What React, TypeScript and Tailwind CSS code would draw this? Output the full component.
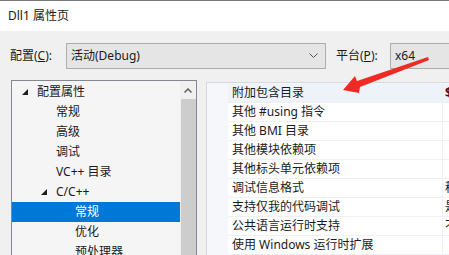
import React from "react";

const tree = [
  { label: "配置属性", level: 1, open: true },
  { label: "常规", level: 2 },
  { label: "高级", level: 2 },
  { label: "调试", level: 2 },
  { label: "VC++ 目录", level: 2 },
  { label: "C/C++", level: 2, open: true },
  { label: "常规", level: 3, selected: true },
  { label: "优化", level: 3 },
  { label: "预处理器", level: 3 },
];

const props = [
  { name: "附加包含目录", value: "$(SolutionDir)include", bold: true },
  { name: "其他 #using 指令", value: "" },
  { name: "其他 BMI 目录", value: "" },
  { name: "其他模块依赖项", value: "" },
  { name: "其他标头单元依赖项", value: "" },
  { name: "调试信息格式", value: "程序数据库 (/Zi)" },
  { name: "支持仅我的代码调试", value: "是 (/JMC)" },
  { name: "公共语言运行时支持", value: "不支持" },
  { name: "使用 Windows 运行时扩展", value: "" },
];

function Tri() {
  return (
    <svg width="6" height="6" viewBox="0 0 6 6" className="shrink-0">
      <polygon points="6,0 6,6 0,6" fill="#1e1e1e" />
    </svg>
  );
}

export default function App() {
  return (
    <div className="relative w-[449px] h-[255px] overflow-hidden bg-[#f0f0f0] text-[12px] text-[#1a1a1a] font-['Noto_Sans','Noto_Sans_CJK_SC',sans-serif]">
      {/* title */}
      <div className="h-[31px] bg-white border-t border-[#7a7a7a] flex items-center pl-[8px]">
        Dll1 属性页
      </div>

      {/* config row */}
      <div className="mt-[12px] h-[26px] flex items-center">
        <div className="w-[66px] shrink-0 pl-[10px]">
          配置(<span className="underline">C</span>):
        </div>
        <div className="w-[260px] shrink-0 h-[26px] border border-[#adadad] bg-[#e5e5e5] flex items-center justify-between pl-[4px] pr-[7px]">
          <span>活动(Debug)</span>
          <svg width="9" height="6" viewBox="0 0 9 6">
            <polyline points="0.5,0.5 4.5,4.5 8.5,0.5" fill="none" stroke="#555" strokeWidth="1" />
          </svg>
        </div>
        <div className="w-[64px] shrink-0 pl-[10px]">
          平台(<span className="underline">P</span>):
        </div>
        <div className="w-[70px] shrink-0 h-[26px] border border-[#adadad] bg-[#e5e5e5] flex items-center pl-[4px]">
          x64
        </div>
      </div>

      {/* main */}
      <div className="mt-[11px] flex">
        <div className="ml-[11px] w-[186px] shrink-0 h-[200px] border border-[#828790] bg-[#f5f5f5] flex">
          <div className="flex-1 pt-[1px]">
            {tree.map((t, i) => (
              <div
                key={i}
                className={`h-[20px] flex items-center whitespace-nowrap ${t.selected ? "bg-[#0078d7] text-white" : ""} ${
                  t.level === 1 ? "pl-[10px]" : t.level === 2 ? "pl-[29px]" : "pl-[48px]"
                }`}
              >
                <span className="w-[15px] shrink-0 flex items-center">{t.open ? <Tri /> : null}</span>
                <span>{t.label}</span>
              </div>
            ))}
          </div>
          <div className="w-[16px] shrink-0 bg-[#f0f0f0] flex flex-col items-center">
            <div className="h-[18px] flex items-center justify-center">
              <svg width="8" height="5" viewBox="0 0 8 5">
                <polyline points="0.5,4.5 4,1 7.5,4.5" fill="none" stroke="#606060" strokeWidth="1.5" />
              </svg>
            </div>
            <div className="w-[15px] flex-1 bg-[#cdcdcd]" />
          </div>
        </div>

        <div className="ml-[9px] mt-[2px] w-[300px] shrink-0 h-[200px] border-l border-t border-[#d5d8dd] bg-[#f5f7fb] pl-[21px] pt-[1px]">
          {props.map((p, i) => (
            <div
              key={i}
              className={`h-[19px] flex border-b border-[#eef0f3] ${i === 0 ? "bg-[#eef3fa]" : "bg-white"}`}
            >
              <div className="w-[214px] shrink-0 pl-[4px] flex items-center whitespace-nowrap">{p.name}</div>
              <div
                className={`flex-1 border-l border-[#eef0f3] pl-[2px] flex items-center whitespace-nowrap overflow-hidden ${
                  p.bold ? "font-bold text-[#5a0a0a]" : ""
                }`}
              >
                {p.value}
              </div>
            </div>
          ))}
        </div>
      </div>

      {/* red arrow */}
      <svg className="absolute left-0 top-0 pointer-events-none" width="449" height="255" viewBox="0 0 449 255">
        <polygon
          points="343,90 355,76 357,81 428,57 429,60 360,87 359,93"
          fill="#ee2a24"
        />
      </svg>
    </div>
  );
}
